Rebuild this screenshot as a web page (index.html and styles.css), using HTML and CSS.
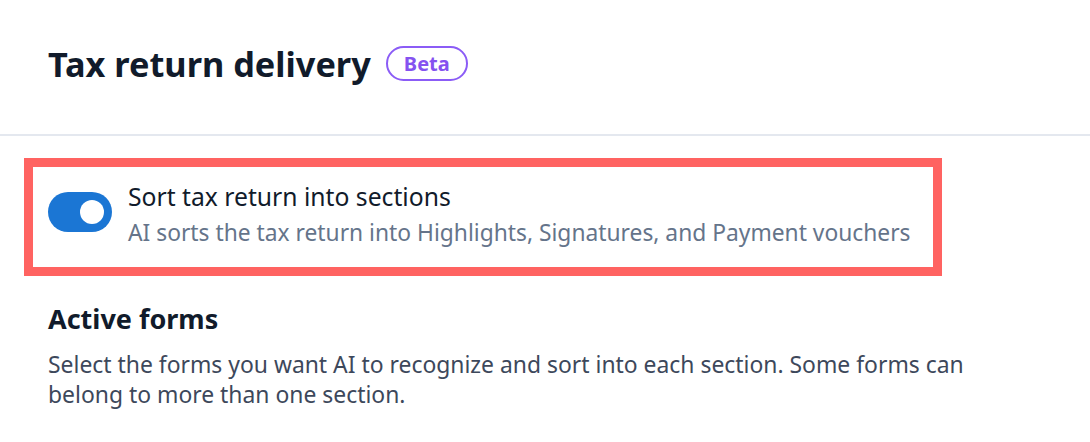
FILE: index.html
```html
<!DOCTYPE html>
<html lang="en">
<head>
<meta charset="utf-8">
<title>Tax return delivery</title>
<link rel="stylesheet" href="styles.css">
</head>
<body>
  <header class="page-header">
    <h1 class="page-title">Tax return delivery</h1>
    <span class="badge">Beta</span>
  </header>
  <main class="content">
    <div class="highlight">
      <div class="setting">
        <span class="toggle" role="switch" aria-checked="true"><span class="knob"></span></span>
        <div class="setting-text">
          <div class="setting-label">Sort tax return into sections</div>
          <div class="setting-desc">AI sorts the tax return into Highlights, Signatures, and Payment vouchers</div>
        </div>
      </div>
    </div>
    <section class="forms">
      <h2 class="forms-title">Active forms</h2>
      <p class="forms-desc">Select the forms you want AI to recognize and sort into each section. Some forms can belong to more than one section.</p>
    </section>
  </main>
</body>
</html>
```

FILE: styles.css
```css
* { box-sizing: border-box; }
html, body {
  margin: 0;
  padding: 0;
  background: #ffffff;
}
body {
  font-family: "Noto Sans", "Open Sans", sans-serif;
  color: #111b2b;
  width: 1090px;
  height: 442px;
  overflow: hidden;
}
.page-header {
  display: flex;
  align-items: center;
  gap: 15px;
  padding: 46px 48px 53px;
  border-bottom: 2px solid #e4e8ef;
}
.page-title {
  margin: 0;
  font-size: 34.3px;
  line-height: 35px;
  font-weight: 700;
  color: #111b2b;
}
.badge {
  display: inline-flex;
  align-items: center;
  justify-content: center;
  height: 35px;
  width: 82px;
  border: 2px solid #8b5cf6;
  border-radius: 18px;
  color: #8552f0;
  font-size: 20px;
  font-weight: 700;
}
.content {
  padding-top: 22px;
}
.highlight {
  margin-left: 24px;
  width: 918px;
  border: 9px solid #ff6361;
  padding: 12px 0 16px 15px;
}
.setting {
  display: flex;
  align-items: flex-start;
  gap: 16px;
}
.toggle {
  flex: none;
  width: 64px;
  height: 40px;
  margin-top: 13px;
  border-radius: 20px;
  background: #1b76d4;
  display: flex;
  align-items: center;
  justify-content: flex-end;
  padding-right: 8px;
}
.knob {
  width: 24px;
  height: 24px;
  border-radius: 50%;
  background: #ffffff;
}
.setting-label {
  font-size: 24.7px;
  line-height: 36px;
  color: #111b2b;
}
.setting-desc {
  font-size: 22.8px;
  line-height: 36px;
  color: #65748a;
}
.forms {
  padding: 26px 48px 0;
  max-width: 1056px;
}
.forms-title {
  margin: 0 0 14px;
  font-size: 27px;
  line-height: 34px;
  font-weight: 700;
  color: #111b2b;
}
.forms-desc {
  margin: 0;
  font-size: 22.9px;
  line-height: 30px;
  color: #3d485b;
}
```
